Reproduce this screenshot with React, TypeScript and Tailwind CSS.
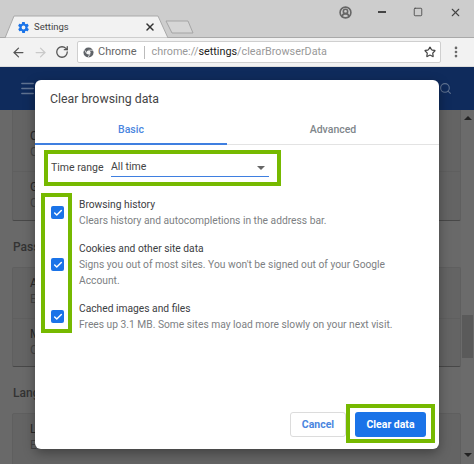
import { ArrowLeft, ArrowRight, Check, Menu, MoreVertical, RotateCw, Search, Star, UserCircle2, X, Square } from 'lucide-react';

const font = { fontFamily: 'Roboto, sans-serif' };

function SettingsGear() {
  return (
    <svg viewBox="0 0 24 24" className="w-[13px] h-[13px]" fill="#1a73e8">
      <path d="M19.4 13a7.5 7.5 0 0 0 0-2l2.1-1.6a.5.5 0 0 0 .1-.6l-2-3.5a.5.5 0 0 0-.6-.2l-2.5 1a7.3 7.3 0 0 0-1.7-1l-.4-2.7a.5.5 0 0 0-.5-.4h-4a.5.5 0 0 0-.5.4l-.4 2.7a7.3 7.3 0 0 0-1.7 1l-2.5-1a.5.5 0 0 0-.6.2l-2 3.5a.5.5 0 0 0 .1.6L4.6 11a7.5 7.5 0 0 0 0 2l-2.1 1.6a.5.5 0 0 0-.1.6l2 3.5c.1.2.4.3.6.2l2.5-1c.5.4 1.1.7 1.7 1l.4 2.7c0 .2.2.4.5.4h4c.3 0 .5-.2.5-.4l.4-2.7c.6-.3 1.2-.6 1.7-1l2.5 1c.2.1.5 0 .6-.2l2-3.5a.5.5 0 0 0-.1-.6zM12 15.5a3.5 3.5 0 1 1 0-7 3.5 3.5 0 0 1 0 7z" />
    </svg>
  );
}

function ChromeMark() {
  return (
    <svg viewBox="0 0 24 24" className="w-[11px] h-[11px]">
      <circle cx="12" cy="12" r="11" fill="#5f6368" />
      <circle cx="12" cy="12" r="4.5" fill="#f5f5f5" />
      <path d="M12 7h10M8 14.5 3 5.5M15.5 15l-5 8.5" stroke="#f5f5f5" strokeWidth="1.6" />
    </svg>
  );
}

function Tick() {
  return (
    <div className="w-[13px] h-[13px] rounded-[2px] bg-[#1a73e8] flex items-center justify-center">
      <Check className="w-[10px] h-[10px] text-white" strokeWidth={3.5} />
    </div>
  );
}

function CardRow({ a, b, divided }: { a: string; b: string; divided?: boolean }) {
  return (
    <div className={`h-[50px] pl-[17px] pt-[7px] ${divided ? 'border-t border-[#5f5f5f]' : ''}`}>
      <div className="text-[12px] leading-[16px] text-[#2a2a2a]">{a}</div>
      <div className="text-[12px] leading-[16px] text-[#444]">{b}</div>
    </div>
  );
}

function DataRow({ title, lines, height, tickPad }: { title: string; lines: string[]; height: string; tickPad: string }) {
  return (
    <div className={`flex ${height}`}>
      <div className={`w-[28px] shrink-0 ${tickPad}`}><Tick /></div>
      <div>
        <div className="text-[10.25px] leading-[16px] text-[#3c4043]">{title}</div>
        {lines.map((line) => (
          <div key={line} className="text-[10.25px] leading-[16px] text-[#7d7f83]">{line}</div>
        ))}
      </div>
    </div>
  );
}

export default function App() {
  return (
    <div className="relative w-[474px] h-[464px] overflow-hidden bg-[#696969]" style={font}>
      {/* Title bar and tab */}
      <div className="relative h-[38px] bg-[#cdcdcd] border-b border-[#a9a9a9]">
        <svg viewBox="0 0 200 23" className="absolute left-0 top-[15px] w-[200px] h-[23px]">
          <path d="M5 23 14 1h144l10 22z" fill="#f2f2f2" stroke="#a9a9a9" strokeWidth="1" />
          <path d="M166 6h22l5 12h-21z" fill="#d6d6d6" stroke="#a5a5a5" />
        </svg>
        <div className="absolute left-[17px] top-[20px] flex items-center">
          <SettingsGear />
          <span className="ml-[4px] text-[9.5px] leading-[14px] text-[#444]">Settings</span>
        </div>
        <X className="absolute left-[144px] top-[21px] w-[12px] h-[12px] text-[#333]" strokeWidth={3} />
        <div className="absolute right-0 top-0 h-[24px] flex items-center text-[#444]">
          <UserCircle2 className="w-[13px] h-[13px] mr-[26px] text-[#666]" strokeWidth={3} />
          <span className="w-[8px] h-[2px] bg-[#444] mr-[27px]" />
          <Square className="w-[10px] h-[10px] mr-[26px]" strokeWidth={2} />
          <X className="w-[13px] h-[13px] mr-[12px]" strokeWidth={2} />
        </div>
      </div>

      {/* Toolbar */}
      <div className="h-[29px] bg-[#f2f2f2] flex items-center border-b border-[#ddd]">
        <ArrowLeft className="ml-[11px] w-[15px] h-[15px] text-[#555]" strokeWidth={2} />
        <ArrowRight className="ml-[7px] w-[15px] h-[15px] text-[#c9c9c9]" strokeWidth={2} />
        <RotateCw className="ml-[7px] w-[14px] h-[14px] text-[#555]" strokeWidth={2.2} />
        <div className="ml-[8px] w-[364px] h-[22px] bg-white border border-[#cfcfcf] rounded-[2px] flex items-center pl-[5px]">
          <ChromeMark />
          <span className="ml-[4px] text-[11px] text-[#666]">Chrome</span>
          <span className="mx-[7px] w-px h-[13px] bg-[#bbb]" />
          <span className="text-[10.8px] text-[#999]">chrome://<span className="text-[#222]">settings</span>/clearBrowserData</span>
          <Star className="ml-auto mr-[4px] w-[12px] h-[12px] text-[#444]" strokeWidth={2.4} />
        </div>
        <MoreVertical className="ml-auto mr-[11px] w-[14px] h-[14px] text-[#666]" strokeWidth={2.6} />
      </div>

      {/* Dimmed settings header */}
      <div className="h-[43px] bg-[#0f2b5c] flex items-center justify-between pl-[19px] pr-[22px]">
        <Menu className="w-[17px] h-[17px] text-[#5f7290]" strokeWidth={2} />
        <Search className="w-[13px] h-[13px] text-[#5f7290]" strokeWidth={2} />
      </div>

      {/* Dimmed settings page */}
      <div className="flex">
        <div className="w-[449px] ml-[12px] text-[12px]">
          <div className="border-x border-[#5f5f5f] border-b border-b-[#484848] rounded-b-[2px] bg-[#646464] h-[111px] pt-[11px]">
            <CardRow a="C" b="C" />
            <CardRow a="G" b="C" divided />
          </div>
          <div className="h-[46px] pt-[18px] pl-[1px] leading-[16px] font-medium text-[#333]">Passwords</div>
          <div className="border border-[#5f5f5f] border-b-[#484848] rounded-[2px] bg-[#646464] h-[100px]">
            <CardRow a="A" b="E" />
            <CardRow a="M" b="O" divided />
          </div>
          <div className="h-[46px] pt-[18px] pl-[1px] leading-[16px] font-medium text-[#333]">Languages</div>
          <div className="border border-[#5f5f5f] rounded-[2px] bg-[#646464] h-[60px]">
            <CardRow a="L" b="E" />
          </div>
        </div>
        <div className="relative w-[13px] h-[354px] bg-[#6b6b6b] flex flex-col items-center justify-between pt-[6px] pb-[7px]">
          <div className="w-0 h-0 border-x-[4px] border-x-transparent border-b-[4px] border-b-[#222]" />
          <div className="absolute top-[205px] left-[1px] w-[11px] h-[43px] bg-[#5a5a5a]" />
          <div className="w-0 h-0 border-x-[4px] border-x-transparent border-t-[4px] border-t-[#222]" />
        </div>
      </div>

      {/* Dialog */}
      <div className="absolute left-[35px] top-[80px] w-[404px] h-[369px] bg-white rounded-[6px] flex flex-col shadow-[0_4px_12px_rgba(0,0,0,0.35)]">
        <div className="h-[40px] pl-[15px] pt-[11px] text-[12.3px] leading-[16px] text-[#444]">Clear browsing data</div>
        <div className="flex h-[25px] border-b border-[#e3e3e3] text-[10.5px] font-medium">
          <div className="w-[192px] h-[25px] border-b-2 border-[#3f7fe0] text-center text-[#4a86e0] leading-[19px]">Basic</div>
          <div className="flex-1 text-center text-[#80868b] leading-[19px]">Advanced</div>
        </div>
        <div className="mt-[14px] ml-[16px] flex items-center h-[18px] text-[10.5px] text-[#444]">
          <span className="w-[60px]">Time range</span>
          <div className="relative w-[158px] h-[18px] border-b border-[#3f7fe0] leading-[16px]">
            All time
            <div className="absolute right-[4px] top-[7px] w-0 h-0 border-x-[4px] border-x-transparent border-t-[4px] border-t-[#666]" />
          </div>
        </div>
        <div className="pl-[16px] pt-[20px] flex flex-col">
          <DataRow title="Browsing history" lines={['Clears history and autocompletions in the address bar.']} height="h-[44px]" tickPad="pt-[9px]" />
          <DataRow title="Cookies and other site data" lines={["Signs you out of most sites. You won't be signed out of your Google", 'Account.']} height="h-[60px]" tickPad="pt-[17px]" />
          <DataRow title="Cached images and files" lines={['Frees up 3.1 MB. Some sites may load more slowly on your next visit.']} height="h-[44px]" tickPad="pt-[9px]" />
        </div>
        <div className="mt-auto mb-[12px] mr-[13px] flex justify-end gap-[9px] text-[10.5px] font-bold">
          <button className="w-[56px] h-[25px] rounded-[3px] border border-[#dcdcdc] bg-white text-[#4a86e0]">Cancel</button>
          <button className="w-[71px] h-[25px] rounded-[3px] bg-[#1a73e8] text-white">Clear data</button>
        </div>
      </div>

      {/* Green highlights */}
      <div className="absolute left-[44px] top-[150px] w-[237px] h-[36px] border-[4px] border-[#76b900]" />
      <div className="absolute left-[41px] top-[193px] w-[31px] h-[140px] border-[4px] border-[#76b900]" />
      <div className="absolute left-[346px] top-[404px] w-[89px] h-[39px] border-[4px] border-[#76b900]" />
    </div>
  );
}
